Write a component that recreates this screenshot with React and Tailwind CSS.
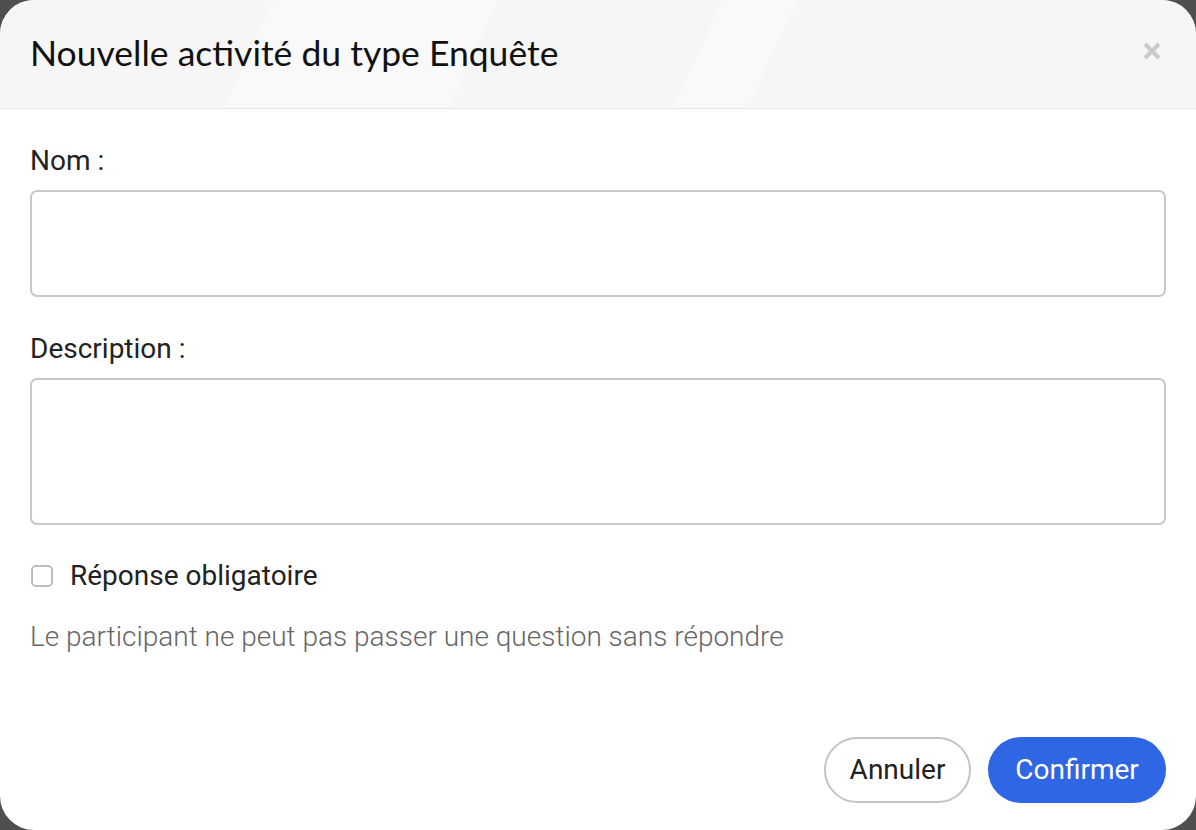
import {useState} from 'react';

export default function App() {
    const [nom, setNom] = useState('');
    const [description, setDescription] = useState('');
    const [required, setRequired] = useState(false);

    return (
        <div className="h-[830px] w-full bg-[#4f4f4f] font-['Roboto',sans-serif]">
            <div className="h-full w-full bg-white rounded-[34px] overflow-hidden flex flex-col">

                {/* Header */}
                <div className="relative h-[109px] shrink-0 bg-[#f6f6f6] border-b border-[#e6e6e6] px-[30px] flex items-center justify-between overflow-hidden">
                    <div className="absolute inset-0 bg-[linear-gradient(115deg,transparent_0%,transparent_22%,rgba(255,255,255,0.35)_22%,rgba(255,255,255,0.35)_40%,transparent_40%,transparent_58%,rgba(255,255,255,0.3)_58%,rgba(255,255,255,0.3)_64%,transparent_64%)]"/>
                    <h1 className="relative font-['Lato',sans-serif] text-[35.5px] text-[#111] pb-[2px]">
                        Nouvelle activité du type Enquête
                    </h1>
                    <button className="relative mr-[4px] mb-[6px]" aria-label="Fermer">
                        <svg width="20" height="20" viewBox="0 0 20 20">
                            <path d="M3 3 L17 17 M17 3 L3 17" stroke="#c9c9c9" strokeWidth="4"/>
                        </svg>
                    </button>
                </div>

                {/* Body */}
                <div className="flex-1 px-[30px] pt-[36px] flex flex-col">
                    <label className="text-[28px] leading-[32px] text-[#222]">Nom :</label>
                    <input
                        className="mt-[13px] h-[107px] w-full border-2 border-[#c8c8c8] rounded-[7px] px-4 text-[28px] outline-none"
                        value={nom}
                        onChange={e => setNom(e.target.value)}
                    />

                    <label className="mt-[36px] text-[28px] leading-[32px] text-[#222]">Description :</label>
                    <textarea
                        className="mt-[13px] h-[147px] w-full border-2 border-[#c8c8c8] rounded-[7px] px-4 py-3 text-[28px] outline-none resize-none"
                        value={description}
                        onChange={e => setDescription(e.target.value)}
                    />

                    <label className="mt-[35px] flex items-center gap-[17px] cursor-pointer">
                        <input
                            type="checkbox"
                            checked={required}
                            onChange={e => setRequired(e.target.checked)}
                            className="appearance-none w-[22px] h-[22px] ml-[1px] border-2 border-[#bdbdbd] rounded-[5px] bg-white"
                        />
                        <span className="text-[28px] leading-[32px] text-[#222]">Réponse obligatoire</span>
                    </label>

                    <p className="mt-[29px] text-[28px] leading-[32px] font-light text-[#666]">
                        Le participant ne peut pas passer une question sans répondre
                    </p>

                    {/* Footer */}
                    <div className="mt-auto mb-[27px] flex justify-end gap-[17px]">
                        <button className="h-[66px] w-[147px] rounded-full border-2 border-[#c4c4c4] bg-white text-[28px] text-[#222]">
                            Annuler
                        </button>
                        <button className="h-[66px] w-[178px] rounded-full bg-[#2e66e3] text-[28px] text-white">
                            Confirmer
                        </button>
                    </div>
                </div>
            </div>
        </div>
    );
}
